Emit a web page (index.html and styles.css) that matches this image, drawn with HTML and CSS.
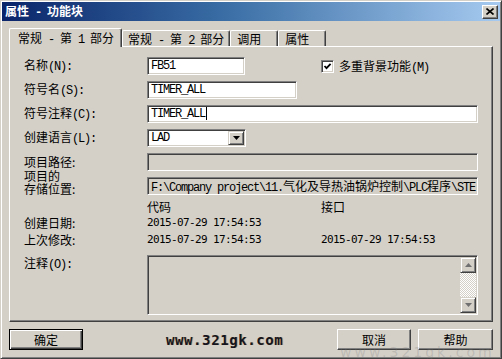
FILE: index.html
```html
<!DOCTYPE html>
<html lang="zh-CN">
<head>
    <meta charset="UTF-8">
    <title>属性 - 功能块</title>
    <link rel="stylesheet" href="styles.css">
</head>
<body>
    <div class="window">
        <div class="titlebar">
            <span class="title">属性<span class="m"> - </span>功能块</span>
            <span class="close-btn">
                <svg width="8" height="7" viewBox="0 0 8 7"><path d="M0.5 0.5 L7.5 6.5 M7.5 0.5 L0.5 6.5" stroke="#000" stroke-width="1.6"/></svg>
            </span>
        </div>
        <div class="client">
            <div class="tabs">
                <div class="tab active">常规<span class="m"> - </span>第<span class="m"> 1 </span>部分</div>
                <div class="tab">常规<span class="m"> - </span>第<span class="m"> 2 </span>部分</div>
                <div class="tab tab-short">调用</div>
                <div class="tab tab-short">属性</div>
            </div>
            <div class="panel">
                <div class="fields">
                    <div class="row">
                        <div class="lbl">名称<span class="m">(N):</span></div>
                        <div class="field w-98 m">FB51</div>
                        <div class="check-wrap">
                            <span class="checkbox">
                                <svg width="9" height="9" viewBox="0 0 9 9"><path d="M1.5 4 L3.5 6.2 L7.6 1.8" fill="none" stroke="#000" stroke-width="1.8"/></svg>
                            </span>
                            <span>多重背景功能<span class="m">(M)</span></span>
                        </div>
                    </div>
                    <div class="row">
                        <div class="lbl">符号名<span class="m">(S):</span></div>
                        <div class="field w-150 m">TIMER_ALL</div>
                    </div>
                    <div class="row">
                        <div class="lbl">符号注释<span class="m">(C):</span></div>
                        <div class="field w-331 m">TIMER_ALL<span class="caret"></span></div>
                    </div>
                    <div class="row">
                        <div class="lbl">创建语言<span class="m">(L):</span></div>
                        <div class="field combo w-99">
                            <span class="m">LAD</span>
                            <span class="drop-btn">
                                <svg width="7" height="4" viewBox="0 0 7 4"><polygon points="0,0 7,0 3.5,4" fill="#000"/></svg>
                            </span>
                        </div>
                    </div>
                    <div class="row">
                        <div class="lbl">项目路径:</div>
                        <div class="field w-331 disabled"></div>
                    </div>
                    <div class="row row-tall">
                        <div class="lbl lbl-two">项目的<br>存储位置:</div>
                        <div class="field w-331 disabled m">F:\Company project\11.<span class="cn">气化及导热油锅炉控制</span>\PLC<span class="cn">程序</span>\STE</div>
                    </div>
                </div>

                <div class="info">
                    <div class="info-head">
                        <div class="lbl"></div>
                        <div class="col1">代码</div>
                        <div>接口</div>
                    </div>
                    <div class="info-row">
                        <div class="lbl">创建日期:</div>
                        <div class="col1 date">2015-07-29 17:54:53</div>
                        <div class="date"></div>
                    </div>
                    <div class="info-row">
                        <div class="lbl">上次修改:</div>
                        <div class="col1 date">2015-07-29 17:54:53</div>
                        <div class="date">2015-07-29 17:54:53</div>
                    </div>
                </div>

                <div class="notes-row">
                    <div class="lbl">注释<span class="m">(O):</span></div>
                    <div class="field notes disabled">
                        <div class="scrollbar">
                            <span class="scroll-btn">
                                <svg width="7" height="4" viewBox="0 0 7 4"><polygon points="0,4 7,4 3.5,0" fill="#707070"/></svg>
                            </span>
                            <span class="scroll-track"></span>
                            <span class="scroll-btn">
                                <svg width="7" height="4" viewBox="0 0 7 4"><polygon points="0,0 7,0 3.5,4" fill="#707070"/></svg>
                            </span>
                        </div>
                    </div>
                </div>
            </div>

            <div class="buttons">
                <button class="btn btn-default">确定</button>
                <span class="brand">www.321gk.com</span>
                <button class="btn btn-cancel">取消</button>
                <button class="btn btn-help">帮助</button>
            </div>
            <span class="ghost">www.321gk.com</span>
        </div>
    </div>
</body>
</html>
```

FILE: styles.css
```css
* {
    margin: 0;
    padding: 0;
    box-sizing: border-box;
}

body {
    width: 502px;
    height: 359px;
    overflow: hidden;
    background: #d4d0c8;
    font-family: "Noto Sans CJK SC", sans-serif;
    font-size: 12px;
    color: #000;
}

/* latin runs: 6px per char like the old bitmap font */
.m {
    font-family: "Liberation Mono", monospace;
    font-size: 12px;
    letter-spacing: -1.2px;
}

.cn {
    font-family: "Noto Sans CJK SC", sans-serif;
    letter-spacing: 0;
}

.window {
    width: 502px;
    height: 359px;
    padding: 1px;
    background: #d4d0c8;
    border: 1px solid;
    border-color: #d4d0c8 #404040 #404040 #d4d0c8;
    box-shadow: inset 1px 1px #fff, inset -1px -1px #808080;
}

.titlebar {
    height: 19px;
    display: flex;
    align-items: center;
    justify-content: space-between;
    padding: 0 2px 0 3px;
    background: linear-gradient(90deg, #0a246a 0%, #3a6ea5 45%, #a6caf0 100%);
}

.title {
    color: #fff;
    font-weight: 700;
    font-size: 12px;
    line-height: 19px;
    white-space: pre;
}

.title .m {
    font-weight: 700;
}

.close-btn {
    width: 16px;
    height: 14px;
    display: flex;
    align-items: center;
    justify-content: center;
    background: #d4d0c8;
    border: 1px solid;
    border-color: #fff #404040 #404040 #fff;
    box-shadow: inset -1px -1px #808080;
}

.client {
    position: relative;
    padding: 7px 7px 0 7px;
}

/* tabs */
.tabs {
    display: flex;
    align-items: flex-end;
    height: 18px;
}

.tab {
    height: 16px;
    line-height: 15px;
    padding: 0 5px 0 5px;
    white-space: pre;
    border-top: 1px solid #fff;
    border-left: 1px solid #fff;
    border-right: 1px solid #404040;
    box-shadow: inset -1px 0 #808080;
    border-top-left-radius: 2px;
    border-top-right-radius: 2px;
}

.tab.active {
    position: relative;
    z-index: 1;
    height: 19px;
    margin-bottom: -1px;
    padding: 1px 7px 0 8px;
    background: #d4d0c8;
}

.tab-short {
    width: 48px;
    padding: 0 0 0 6px;
}

.panel {
    height: 276px;
    padding: 10px 0 0 14px;
    border: 1px solid;
    border-color: #fff #404040 #404040 #fff;
    box-shadow: inset -1px -1px #808080;
}

/* form rows */
.fields {
    display: flex;
    flex-direction: column;
    gap: 6px;
}

.row {
    display: flex;
    align-items: center;
    height: 18px;
}

.row-tall {
    align-items: flex-end;
}

.lbl {
    width: 123px;
    flex: none;
    line-height: 16px;
    white-space: nowrap;
}

.lbl-two {
    line-height: 13px;
}

.field {
    height: 18px;
    padding: 0 3px;
    line-height: 16px;
    background: #fff;
    white-space: nowrap;
    overflow: hidden;
    border: 1px solid;
    border-color: #808080 #fff #fff #808080;
    box-shadow: inset 1px 1px #404040, inset -1px -1px #d4d0c8;
}

.field.disabled {
    background: #d4d0c8;
}

.w-98 { width: 98px; }
.w-99 { width: 99px; }
.w-150 { width: 150px; }
.w-331 { width: 331px; }

.caret {
    display: inline-block;
    width: 1px;
    height: 13px;
    margin-left: 1px;
    vertical-align: -3px;
    background: #000;
}

.combo {
    display: flex;
    align-items: center;
    justify-content: space-between;
    padding: 0 1px 0 3px;
}

.drop-btn {
    width: 16px;
    height: 14px;
    display: flex;
    align-items: center;
    justify-content: center;
    background: #d4d0c8;
    border: 1px solid;
    border-color: #d4d0c8 #404040 #404040 #d4d0c8;
    box-shadow: inset 1px 1px #fff, inset -1px -1px #808080;
}

.check-wrap {
    display: flex;
    align-items: center;
    gap: 5px;
    margin-left: 76px;
    white-space: pre;
}

.checkbox {
    width: 13px;
    height: 13px;
    display: flex;
    align-items: center;
    justify-content: center;
    background: #fff;
    border: 1px solid;
    border-color: #808080 #fff #fff #808080;
    box-shadow: inset 1px 1px #404040, inset -1px -1px #d4d0c8;
}

/* dates */
.info {
    padding-top: 5px;
}

.info-head,
.info-row {
    display: flex;
    align-items: center;
}

.info-head {
    height: 14px;
    line-height: 14px;
}

.info-row {
    height: 17px;
}

.col1 {
    width: 174px;
}

.date {
    font-family: "DejaVu Sans Mono", monospace;
    font-size: 11px;
    letter-spacing: -0.62px;
}

/* notes */
.notes-row {
    display: flex;
    align-items: flex-start;
    margin-top: 7px;
}

.notes {
    width: 331px;
    height: 60px;
    display: flex;
    justify-content: flex-end;
    padding: 1px 1px 1px 0;
}

.scrollbar {
    width: 16px;
    height: 56px;
    display: flex;
    flex-direction: column;
}

.scroll-btn {
    width: 16px;
    height: 16px;
    flex: none;
    display: flex;
    align-items: center;
    justify-content: center;
    background: #d4d0c8;
    border: 1px solid;
    border-color: #d4d0c8 #404040 #404040 #d4d0c8;
    box-shadow: inset 1px 1px #fff, inset -1px -1px #808080;
}

.scroll-track {
    flex: 1;
    background-color: #fff;
    background-image: conic-gradient(#d4d0c8 25%, #fff 0 50%, #d4d0c8 0 75%, #fff 0);
    background-size: 2px 2px;
}

/* bottom buttons */
.buttons {
    display: flex;
    align-items: center;
    margin-top: 7px;
    height: 21px;
}

.btn {
    width: 74px;
    height: 21px;
    font-family: "Noto Sans CJK SC", sans-serif;
    font-size: 12px;
    line-height: 16px;
    color: #000;
    background: #d4d0c8;
    border: 1px solid;
    border-color: #fff #404040 #404040 #fff;
    box-shadow: inset -1px -1px #808080;
}

.btn-default {
    border-color: #000;
    box-shadow: inset 1px 1px #fff, inset -1px -1px #404040, inset -2px -2px #808080;
}

.btn-cancel {
    margin-left: auto;
}

.btn-help {
    width: 75px;
    margin-left: 7px;
}

.brand {
    margin-left: 83px;
    font-family: "DejaVu Sans Mono", monospace;
    font-weight: 700;
    font-size: 14px;
    letter-spacing: 0.6px;
    color: #141420;
    text-shadow: 1px 0 0 rgba(176, 112, 24, 0.45);
}

.ghost {
    position: absolute;
    left: 338px;
    bottom: -10px;
    font-family: "DejaVu Sans", sans-serif;
    font-size: 14px;
    letter-spacing: 3px;
    color: rgba(120, 120, 120, 0.25);
    pointer-events: none;
}
```
